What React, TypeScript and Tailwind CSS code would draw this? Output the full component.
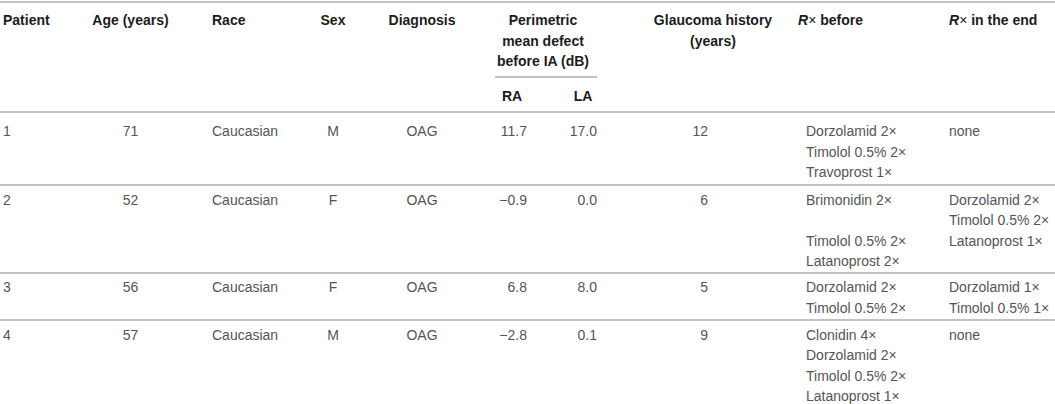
import React from "react";

const cols =
  "grid grid-cols-[88px_85px_129px_62px_116px_50px_70px_195px_151px_109px]";

type Row = {
  p: string;
  age: string;
  race: string;
  sex: string;
  dx: string;
  ra: string;
  la: string;
  hist: string;
  before: string[];
  end: string[];
  pad: string;
};

const rows: Row[] = [
  {
    p: "1",
    age: "71",
    race: "Caucasian",
    sex: "M",
    dx: "OAG",
    ra: "11.7",
    la: "17.0",
    hist: "12",
    before: ["Dorzolamid 2×", "Timolol 0.5% 2×", "Travoprost 1×"],
    end: ["none"],
    pad: "pt-[8px] pb-[1px]",
  },
  {
    p: "2",
    age: "52",
    race: "Caucasian",
    sex: "F",
    dx: "OAG",
    ra: "−0.9",
    la: "0.0",
    hist: "6",
    before: ["Brimonidin 2×", "\u00a0", "Timolol 0.5% 2×", "Latanoprost 2×"],
    end: ["Dorzolamid 2×", "Timolol 0.5% 2×", "Latanoprost 1×"],
    pad: "pt-[4px] pb-0",
  },
  {
    p: "3",
    age: "56",
    race: "Caucasian",
    sex: "F",
    dx: "OAG",
    ra: "6.8",
    la: "8.0",
    hist: "5",
    before: ["Dorzolamid 2×", "Timolol 0.5% 2×"],
    end: ["Dorzolamid 1×", "Timolol 0.5% 1×"],
    pad: "pt-[3.5px] pb-[1px]",
  },
  {
    p: "4",
    age: "57",
    race: "Caucasian",
    sex: "M",
    dx: "OAG",
    ra: "−2.8",
    la: "0.1",
    hist: "9",
    before: ["Clonidin 4×", "Dorzolamid 2×", "Timolol 0.5% 2×", "Latanoprost 1×"],
    end: ["none"],
    pad: "pt-[3.5px] pb-[1px]",
  },
];

export default function App() {
  return (
    <div className="w-[1055px] h-[404px] overflow-hidden bg-white font-['Liberation_Sans',Arial,sans-serif] text-[14px] leading-[20.5px]">
      <div className="mt-[1px] border-t-2 border-[#c2c2c2]">
        {/* Header */}
        <div className={`${cols} border-b-2 border-[#c2c2c2] font-bold text-[#1c1c1c] pt-[7px] whitespace-nowrap`}>
          <div className="pl-[3px]">Patient</div>
          <div className="text-center">Age (years)</div>
          <div className="pl-[39px]">Race</div>
          <div className="text-center">Sex</div>
          <div className="text-center">Diagnosis</div>
          <div className="col-span-2 flex flex-col">
            <div className="text-center pl-[6px]">
              Perimetric
              <br />
              mean defect
              <br />
              before IA (dB)
            </div>
            <div className="ml-[15px] mr-[3px] mt-[4px] h-[2px] bg-[#c2c2c2]" />
            <div className="grid grid-cols-[50px_70px] mt-[8px] pb-[5px]">
              <div className="pl-[17px] pr-[3px] text-center">RA</div>
              <div className="pl-[39px] pr-[3px] text-center">LA</div>
            </div>
          </div>
          <div className="pl-[31px] text-center">
            Glaucoma history
            <br />
            (years)
          </div>
          <div className="pl-[3px]">
            <i>R</i>
            <span className="font-normal">×</span> before
          </div>
          <div className="pl-[3px]">
            <i>R</i>
            <span className="font-normal">×</span> in the end
          </div>
        </div>

        {/* Body */}
        {rows.map((r) => (
          <div
            key={r.p}
            className={`${cols} border-b-2 border-[#c2c2c2] text-[#555] whitespace-nowrap ${r.pad}`}
          >
            <div className="pl-[3px]">{r.p}</div>
            <div className="text-center">{r.age}</div>
            <div className="pl-[39px]">{r.race}</div>
            <div className="text-center">{r.sex}</div>
            <div className="text-center">{r.dx}</div>
            <div className="text-right pr-[3px]">{r.ra}</div>
            <div className="text-right pr-[3px]">{r.la}</div>
            <div className="text-right pr-[87px]">{r.hist}</div>
            <div className="pl-[11px] flex flex-col">
              {r.before.map((t, k) => (
                <span key={k}>{t}</span>
              ))}
            </div>
            <div className="pl-[3px] flex flex-col">
              {r.end.map((t, k) => (
                <span key={k}>{t}</span>
              ))}
            </div>
          </div>
        ))}
      </div>
    </div>
  );
}
